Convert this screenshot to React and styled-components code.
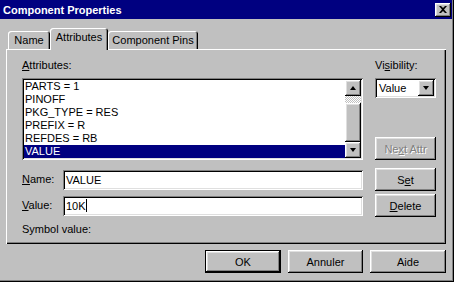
import React from 'react';
import styled, { createGlobalStyle, css } from 'styled-components';

const GlobalStyle = createGlobalStyle`
  html, body {
    margin: 0;
    padding: 0;
    background: #c0c0c0;
  }
  body {
    font-family: 'Liberation Sans', Arial, sans-serif;
    font-size: 11px;
    color: #000;
  }
`;

const raised = css`
  box-shadow: inset -1px -1px #000, inset 1px 1px #fff, inset -2px -2px #808080,
    inset 2px 2px #dfdfdf;
`;

const sunken = css`
  box-shadow: inset 1px 1px #808080, inset -1px -1px #fff, inset 2px 2px #000,
    inset -2px -2px #dfdfdf;
`;

const Window = styled.div`
  width: 454px;
  height: 282px;
  background: #c0c0c0;
  box-sizing: border-box;
  box-shadow: inset -1px -1px #000, inset -2px -2px #808080;
  display: flex;
  flex-direction: column;
`;

const TitleBar = styled.div`
  height: 19px;
  margin-right: 2px;
  background: #000080;
  color: #fff;
  display: flex;
  align-items: center;
  justify-content: space-between;
  padding: 0 1px 0 3px;
  font-weight: bold;
  font-size: 11px;
`;

const CloseButton = styled.div`
  width: 16px;
  height: 14px;
  background: #c0c0c0;
  ${raised};
  display: flex;
  align-items: center;
  justify-content: center;
`;

const Body = styled.div`
  padding: 9px 8px 0 6px;
  display: flex;
  flex-direction: column;
`;

const TabStrip = styled.div`
  display: flex;
  align-items: flex-end;
  height: 21px;
  padding-left: 2px;
`;

const Tab = styled.div`
  height: ${p => (p.$active ? '22px' : '18px')};
  margin-bottom: ${p => (p.$active ? '-1px' : '0')};
  width: ${p => p.$w}px;
  box-sizing: border-box;
  background: #c0c0c0;
  position: relative;
  z-index: ${p => (p.$active ? 1 : 0)};
  border-radius: 3px 3px 0 0;
  box-shadow: inset 1px 1px #fff, inset -1px 0 #000, inset -2px 0 #808080;
  display: flex;
  justify-content: center;
  padding-top: ${p => (p.$active ? '3px' : '3px')};
`;

const Panel = styled.div`
  width: 440px;
  height: 195px;
  box-sizing: border-box;
  ${css`
    box-shadow: inset 1px 1px #fff, inset -1px -1px #000, inset -2px -2px #808080;
  `}
  padding: 10px 0 0 16px;
  display: flex;
  flex-direction: column;
`;

const TopRow = styled.div`
  display: grid;
  grid-template-columns: 341px 61px;
  column-gap: 12px;
`;

const Column = styled.div`
  display: flex;
  flex-direction: column;
`;

const Label = styled.div`
  height: 13px;
  line-height: 13px;
  margin-bottom: ${p => p.$mb || 0}px;
  white-space: nowrap;
`;

const ListBox = styled.div`
  height: 82px;
  box-sizing: border-box;
  padding: 2px;
  background: #fff;
  ${sunken};
  display: flex;
`;

const Items = styled.div`
  flex: 1;
  display: flex;
  flex-direction: column;
`;

const Item = styled.div`
  height: 13px;
  line-height: 13px;
  padding-left: 1px;
  background: ${p => (p.$selected ? '#000080' : 'transparent')};
  color: ${p => (p.$selected ? '#fff' : '#000')};
`;

const ScrollBar = styled.div`
  width: 16px;
  display: flex;
  flex-direction: column;
`;

const ArrowButton = styled.div`
  width: 16px;
  height: 16px;
  box-sizing: border-box;
  background: #c0c0c0;
  ${raised};
  display: flex;
  align-items: center;
  justify-content: center;
  flex-shrink: 0;
`;

const Arrow = styled.span`
  width: 0;
  height: 0;
  border-left: 3px solid transparent;
  border-right: 3px solid transparent;
  ${p =>
    p.$up
      ? css`border-bottom: 4px solid #000;`
      : css`border-top: 4px solid #000;`}
`;

const Track = styled.div`
  height: 7px;
  background: repeating-conic-gradient(#c0c0c0 0 25%, #fff 0 50%) 0 0 / 2px 2px;
`;

const Thumb = styled.div`
  height: 39px;
  background: #c0c0c0;
  ${raised};
`;

const Combo = styled.div`
  height: 20px;
  box-sizing: border-box;
  padding: 2px;
  background: #fff;
  ${sunken};
  display: flex;
  align-items: center;
`;

const ComboText = styled.div`
  flex: 1;
  padding-left: 2px;
  line-height: 16px;
`;

const Button = styled.div`
  width: ${p => p.$w || 61}px;
  height: 23px;
  box-sizing: border-box;
  background: #c0c0c0;
  display: flex;
  align-items: center;
  justify-content: center;
  ${p =>
    p.$default
      ? css`
          box-shadow: inset 0 0 0 1px #000, inset -2px -2px #000, inset 2px 2px #fff,
            inset -3px -3px #808080, inset 3px 3px #dfdfdf;
        `
      : raised};
  color: ${p => (p.$disabled ? '#808080' : '#000')};
  text-shadow: ${p => (p.$disabled ? '1px 1px 0 #fff' : 'none')};
  margin-top: ${p => p.$mt || 0}px;
`;

const FieldRow = styled.div`
  display: grid;
  grid-template-columns: 41px 300px 61px;
  column-gap: 0;
  align-items: center;
  margin-top: ${p => p.$mt}px;
  & > :last-child {
    margin-left: 12px;
  }
`;

const TextField = styled.div`
  height: 20px;
  box-sizing: border-box;
  padding: 2px 3px;
  background: #fff;
  ${sunken};
  line-height: 16px;
  display: flex;
  align-items: center;
`;

const Caret = styled.span`
  display: inline-block;
  width: 1px;
  height: 13px;
  background: #000;
`;

const Footer = styled.div`
  display: flex;
  justify-content: flex-end;
  gap: 7px;
  margin-top: 6px;
  padding-right: 0;
`;

const items = ['PARTS = 1', 'PINOFF', 'PKG_TYPE = RES', 'PREFIX = R', 'REFDES = RB', 'VALUE'];

export default function App() {
  return (
    <>
      <GlobalStyle />
      <Window>
        <TitleBar>
          <span>Component Properties</span>
          <CloseButton>
            <svg width="8" height="7" viewBox="0 0 8 7">
              <path d="M0 0h2l2 2 2-2h2L5 3.5 8 7H6L4 5 2 7H0l3-3.5z" fill="#000" />
            </svg>
          </CloseButton>
        </TitleBar>
        <Body>
          <TabStrip>
            <Tab $w={42}>Name</Tab>
            <Tab $w={58} $active>
              Attributes
            </Tab>
            <Tab $w={90}>Component Pins</Tab>
          </TabStrip>
          <Panel>
            <TopRow>
              <Column>
                <Label $mb={6}>
                  <u>A</u>ttributes:
                </Label>
                <ListBox>
                  <Items>
                    {items.map(t => (
                      <Item key={t} $selected={t === 'VALUE'}>
                        {t}
                      </Item>
                    ))}
                  </Items>
                  <ScrollBar>
                    <ArrowButton>
                      <Arrow $up />
                    </ArrowButton>
                    <Track />
                    <Thumb />
                    <ArrowButton>
                      <Arrow />
                    </ArrowButton>
                  </ScrollBar>
                </ListBox>
              </Column>
              <Column>
                <Label $mb={6}>
                  Vi<u>s</u>ibility:
                </Label>
                <Combo>
                  <ComboText>Value</ComboText>
                  <ArrowButton>
                    <Arrow />
                  </ArrowButton>
                </Combo>
                <Button $disabled $mt={39}>
                  Ne<u>x</u>t Attr
                </Button>
              </Column>
            </TopRow>
            <FieldRow $mt={8}>
              <Label>
                <u>N</u>ame:
              </Label>
              <TextField>VALUE</TextField>
              <Button>
                S<u>e</u>t
              </Button>
            </FieldRow>
            <FieldRow $mt={3}>
              <Label>
                <u>V</u>alue:
              </Label>
              <TextField>
                10K
                <Caret />
              </TextField>
              <Button>
                <u>D</u>elete
              </Button>
            </FieldRow>
            <Label style={{ marginTop: 6 }}>Symbol value:</Label>
          </Panel>
          <Footer>
            <Button $w={76} $default>
              OK
            </Button>
            <Button $w={75}>Annuler</Button>
            <Button $w={76}>Aide</Button>
          </Footer>
        </Body>
      </Window>
    </>
  );
}
